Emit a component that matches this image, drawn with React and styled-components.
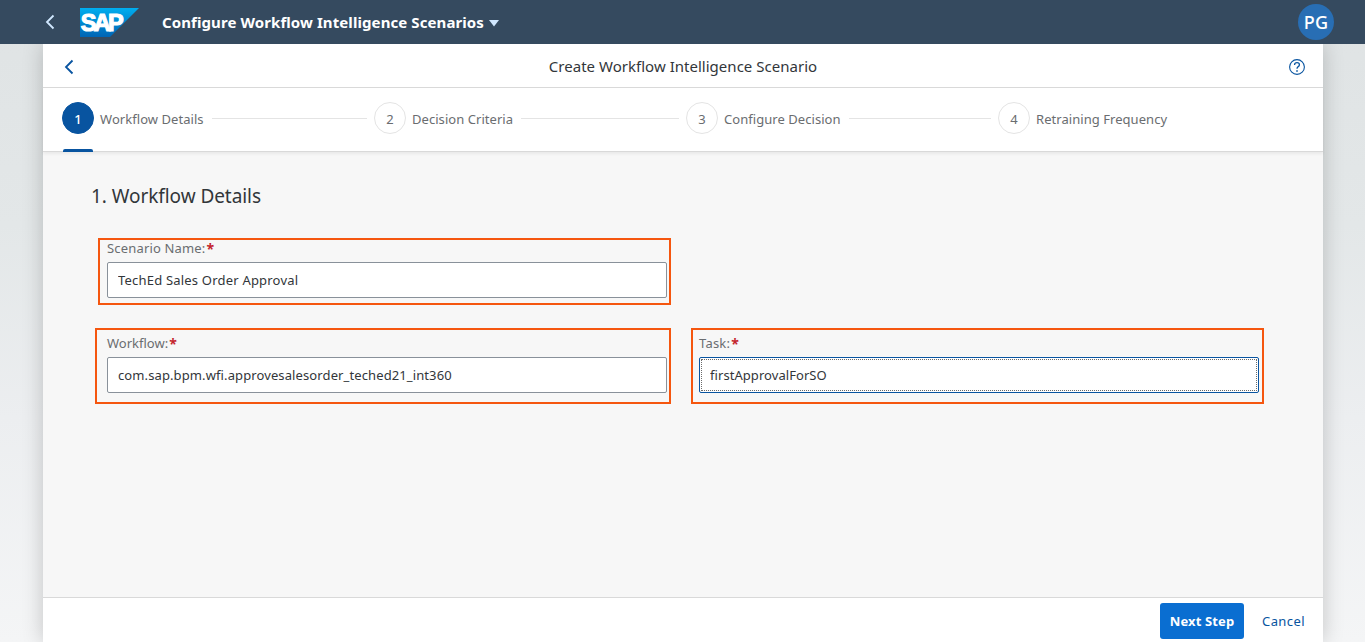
import React from 'react';
import styled, { createGlobalStyle, css } from 'styled-components';

const GlobalStyle = createGlobalStyle`
  * { box-sizing: border-box; }
  body {
    margin: 0;
    overflow: hidden;
    font-family: "Noto Sans", "Liberation Sans", sans-serif;
    font-size: 13px;
    color: #32363a;
  }
  button, input { font: inherit; letter-spacing: inherit; }
`;

const Page = styled.div`
  display: flex;
  flex-direction: column;
  height: 642px;
  background: linear-gradient(180deg, #dfe3e4 0%, #e3e7e8 35%, #eceef0 65%, #f4f5f6 100%);
`;

const ShellBar = styled.header`
  display: flex;
  align-items: center;
  flex: none;
  height: 44px;
  padding: 0 31px 0 44px;
  background: #354a5f;
  color: #fff;
  z-index: 1;
`;

const IconButton = styled.button`
  display: flex;
  align-items: center;
  justify-content: center;
  width: ${(p) => p.$width}px;
  height: 24px;
  padding: 0;
  border: 0;
  background: none;
  color: ${(p) => p.$color};
`;

const Logo = styled.svg`
  margin-left: 24px;
  display: block;
`;

const AppTitle = styled.button`
  display: flex;
  align-items: center;
  gap: 5px;
  margin-left: 23px;
  padding: 0 0 1px;
  border: 0;
  background: none;
  color: #fff;
  font-size: 15px;
  font-weight: 700;
  letter-spacing: ${(p) => p.$spacing}px;
`;

const Caret = styled.svg`
  margin-top: 3px;
`;

const Avatar = styled.div`
  display: flex;
  align-items: center;
  justify-content: center;
  width: 36px;
  height: 36px;
  margin-left: auto;
  padding-bottom: 1px;
  border-radius: 50%;
  background: #286eb4;
  font-size: 18px;
  font-weight: 500;
  letter-spacing: 0.3px;
`;

const Panel = styled.main`
  display: flex;
  flex-direction: column;
  flex: 1;
  width: 1280px;
  margin-left: 43px;
  background: #f7f7f7;
  box-shadow: 0 0 20px rgba(0, 0, 0, 0.2);
`;

const TitleBar = styled.div`
  display: flex;
  align-items: center;
  justify-content: space-between;
  height: 44px;
  padding: 2px 14px 0;
  border-bottom: 1px solid #d9d9d9;
  background: #fff;
`;

const PageTitle = styled.h1`
  margin: 0;
  padding-bottom: 2px;
  font-size: 15px;
  font-weight: 400;
  letter-spacing: 0.02px;
`;

const Steps = styled.ol`
  display: flex;
  height: 64px;
  margin: 0;
  padding: 0 0 0 19px;
  list-style: none;
  border-bottom: 1px solid #d9d9d9;
  background: #fff;
  box-shadow: 0 2px 3px rgba(0, 0, 0, 0.06);
`;

const StepItem = styled.li`
  position: relative;
  display: flex;
  align-items: center;
  width: 312px;
  height: 60px;
  color: #6a6d70;
  ${(p) => p.$active && css`
    &::after {
      content: '';
      position: absolute;
      left: 1px;
      top: 61px;
      width: 30px;
      height: 3px;
      border-radius: 2px 2px 0 0;
      background: #0854a0;
    }
  `}
`;

const StepNumber = styled.span`
  display: flex;
  align-items: center;
  justify-content: center;
  flex: none;
  width: 32px;
  height: 32px;
  padding-top: 1px;
  border: 1px solid ${(p) => (p.$active ? '#0854a0' : '#e4e4e4')};
  border-radius: 50%;
  background: ${(p) => (p.$active ? '#0854a0' : '#fff')};
  color: ${(p) => (p.$active ? '#fff' : '#6a6d70')};
  font-weight: ${(p) => (p.$active ? 500 : 400)};
`;

const StepLabel = styled.span`
  margin-left: 6px;
  padding-top: 2px;
  letter-spacing: 0.05px;
`;

const StepLine = styled.span`
  flex: 1;
  height: 1px;
  margin: 0 7px 0 8px;
  background: #e4e4e4;
`;

const Content = styled.section`
  flex: 1;
  padding: 32px 48px 0;
`;

const SectionTitle = styled.h2`
  margin: 0;
  height: 24px;
  font-size: 19px;
  line-height: 24px;
  font-weight: 400;
  letter-spacing: -0.06px;
`;

const Form = styled.form`
  display: grid;
  grid-template-columns: 560px 560px;
  gap: 36px 32px;
  margin: 31px 0 0 16px;
`;

const Field = styled.label`
  position: relative;
  display: flex;
  flex-direction: column;
  grid-column: ${(p) => p.$column};
  &::before {
    content: '';
    position: absolute;
    inset: ${(p) => p.$frame};
    border: 2px solid #f5560f;
    pointer-events: none;
  }
`;

const FieldLabel = styled.span`
  display: flex;
  height: 23px;
  line-height: 19px;
  color: #6a6d70;
  letter-spacing: ${(p) => p.$spacing}px;
`;

const Required = styled.span`
  margin-left: 1px;
  color: #c4262e;
  font-size: 14px;
  font-weight: 700;
`;

const InputBox = styled.span`
  display: flex;
  height: 36px;
  padding: 1px;
  border: 1px solid ${(p) => (p.$focused ? '#0854a0' : '#89919a')};
  border-radius: 2px;
  background: #fff;
`;

const Input = styled.input`
  flex: 1;
  min-width: 0;
  padding: 0 8px;
  border: 1px dotted ${(p) => (p.$focused ? '#6a6a6a' : 'transparent')};
  outline: 0;
  background: none;
  color: #32363a;
  letter-spacing: ${(p) => p.$spacing}px;
`;

const Footer = styled.footer`
  display: flex;
  justify-content: flex-end;
  align-items: flex-start;
  height: 45px;
  padding: 5px 8px 0;
  border-top: 1px solid #d9d9d9;
  background: #fff;
`;

const Button = styled.button`
  height: 36px;
  width: ${(p) => p.$width}px;
  margin-left: 8px;
  padding: 0;
  border: 0;
  border-radius: 3px;
  background: ${(p) => (p.$primary ? '#0a6ed1' : 'transparent')};
  color: ${(p) => (p.$primary ? '#fff' : '#0854a0')};
  font-weight: ${(p) => (p.$primary ? 700 : 400)};
  letter-spacing: ${(p) => p.$spacing}px;
`;

const Chevron = () => (
  <svg width="10" height="16" viewBox="0 0 10 16" fill="none" stroke="currentColor" strokeWidth="1.8">
    <path d="M8.5 1.5 2 8l6.5 6.5" />
  </svg>
);

const steps = ['Workflow Details', 'Decision Criteria', 'Configure Decision', 'Retraining Frequency'];

const fields = [
  { label: 'Scenario Name:', value: 'TechEd Sales Order Approval', column: 1, frame: '-1px -4px -7px -9px', labelSpacing: 0.17, spacing: 0.2 },
  { label: 'Workflow:', value: 'com.sap.bpm.wfi.approvesalesorder_teched21_int360', column: 1, frame: '-6px -4px -11px -12px', labelSpacing: 0, spacing: 0.11 },
  { label: 'Task:', value: 'firstApprovalForSO', column: 2, frame: '-6px -5px -11px -8px', labelSpacing: 0.2, spacing: 0.06, focused: true },
];

export default function App() {
  return (
    <>
      <GlobalStyle />
      <Page>
        <ShellBar>
          <IconButton $width={12} $color="#d1e8ff" aria-label="Back"><Chevron /></IconButton>
          <Logo width="59" height="29" viewBox="0 0 59 29">
            <defs>
              <linearGradient id="sap" x1="0" y1="0" x2="0" y2="1">
                <stop offset="0" stopColor="#00aeef" />
                <stop offset="1" stopColor="#0064b4" />
              </linearGradient>
            </defs>
            <path d="M0 0h59L30 29H0z" fill="url(#sap)" />
            <text x="0.8" y="22.8" textLength="43" lengthAdjust="spacing" fill="#fff" stroke="#fff" strokeWidth="1.2" fontFamily="Liberation Sans, sans-serif" fontSize="23.5" fontWeight="700">SAP</text>
          </Logo>
          <AppTitle $spacing={0.09}>
            Configure Workflow Intelligence Scenarios
            <Caret width="10" height="7" viewBox="0 0 10 7"><path d="M0 0h10L5 6.5z" fill="#d1e8ff" /></Caret>
          </AppTitle>
          <Avatar>PG</Avatar>
        </ShellBar>
        <Panel>
          <TitleBar>
            <IconButton $width={24} $color="#0854a0" aria-label="Back"><Chevron /></IconButton>
            <PageTitle>Create Workflow Intelligence Scenario</PageTitle>
            <IconButton $width={24} $color="#0854a0" aria-label="Help">
              <svg width="16" height="16" viewBox="0 0 16 16" fill="none" stroke="currentColor">
                <circle cx="8" cy="8" r="7.4" strokeWidth="1.1" />
                <path d="M5.6 6.1V5.6Q5.6 3.7 8 3.7t2.4 2q0 1.2-1.2 1.9Q8 8.3 8 9.8" strokeWidth="1.3" />
                <path d="M8 11.2v1.6" strokeWidth="1.6" />
              </svg>
            </IconButton>
          </TitleBar>
          <Steps>
            {steps.map((label, i) => (
              <StepItem key={label} $active={i === 0}>
                <StepNumber $active={i === 0}>{i + 1}</StepNumber>
                <StepLabel>{label}</StepLabel>
                {i < steps.length - 1 && <StepLine />}
              </StepItem>
            ))}
          </Steps>
          <Content>
            <SectionTitle>1. Workflow Details</SectionTitle>
            <Form>
              {fields.map((f) => (
                <Field key={f.label} $column={f.column} $frame={f.frame}>
                  <FieldLabel $spacing={f.labelSpacing}>{f.label}<Required>*</Required></FieldLabel>
                  <InputBox $focused={f.focused}>
                    <Input defaultValue={f.value} $focused={f.focused} $spacing={f.spacing} />
                  </InputBox>
                </Field>
              ))}
            </Form>
          </Content>
          <Footer>
            <Button $primary $width={84} $spacing={0.12}>Next Step</Button>
            <Button $width={63} $spacing={0.4}>Cancel</Button>
          </Footer>
        </Panel>
      </Page>
    </>
  );
}
